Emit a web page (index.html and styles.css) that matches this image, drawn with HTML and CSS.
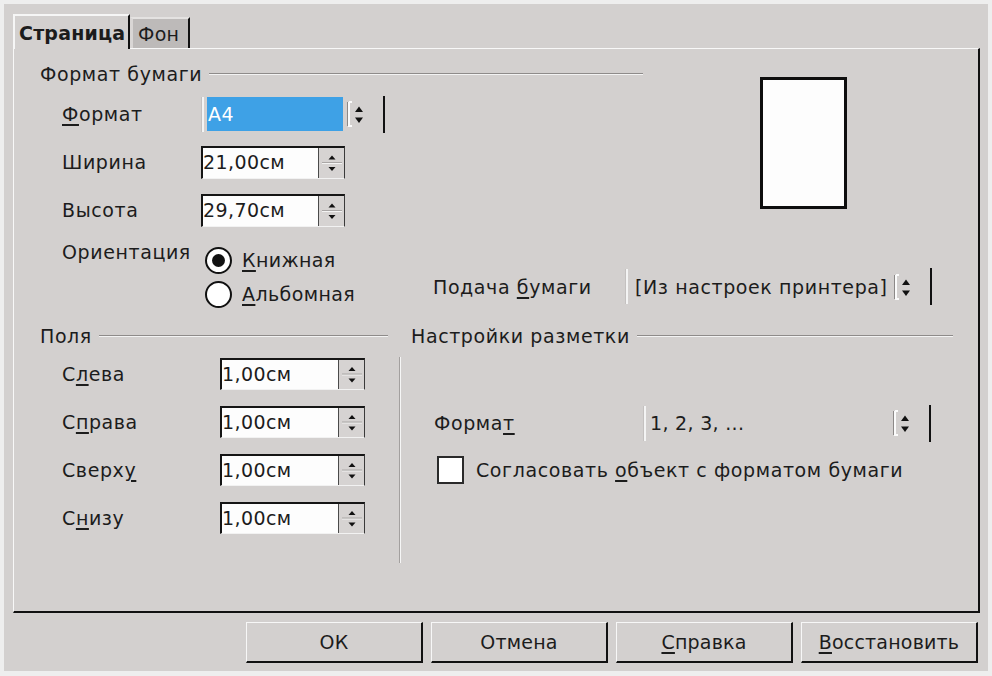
FILE: index.html
```html
<!DOCTYPE html>
<html lang="ru">
<head>
<meta charset="utf-8">
<title>Стиль страницы</title>
<link rel="stylesheet" href="styles.css">
</head>
<body>
<div class="dialog">
  <div class="tabs">
    <div class="tab tab-active">Страница</div>
    <div class="tab tab-inactive">Фон</div>
  </div>
  <div class="panel">
    <div class="top">
      <div class="group-title title-paper"><span>Формат бумаги</span><i class="rule"></i></div>
      <div class="preview"></div>

      <div class="lbl row2"><u>Ф</u>ормат</div>
      <div class="listbox lb-a4 row2">
        <span class="lb-edge-l"></span>
        <span class="lb-text lb-selected">A4</span>
        <svg class="lb-btn" width="18" height="30" viewBox="0 0 18 30"><path d="M1.5 3V27" stroke="#8c8988" stroke-width="1"/><path d="M3 3H6M3 3V27H6" stroke="#fbfbfb" stroke-width="2" fill="none"/><path d="M9 13L13 7.5L17 13Z" fill="#111"/><path d="M9 18.5L13 24L17 18.5Z" fill="#111"/></svg>
        <span class="lb-edge-r"></span>
      </div>

      <div class="lbl row3">Ширина</div>
      <div class="spinbox sb-top row3">
        <span class="sb-field">21,00см</span>
        <span class="sb-spin"><svg width="24" height="30" viewBox="0 0 24 30"><path d="M8.5 11.5L12 7.5L15.5 11.5Z" fill="#111"/><path d="M2 15.5H22" stroke="#f4f4f4" stroke-width="1"/><path d="M2 14.5H22" stroke="#aaa7a6" stroke-width="1"/><path d="M8.5 19L12 23L15.5 19Z" fill="#111"/></svg></span>
      </div>

      <div class="lbl row4">Высота</div>
      <div class="spinbox sb-top row4">
        <span class="sb-field">29,70см</span>
        <span class="sb-spin"><svg width="24" height="30" viewBox="0 0 24 30"><path d="M8.5 11.5L12 7.5L15.5 11.5Z" fill="#111"/><path d="M2 15.5H22" stroke="#f4f4f4" stroke-width="1"/><path d="M2 14.5H22" stroke="#aaa7a6" stroke-width="1"/><path d="M8.5 19L12 23L15.5 19Z" fill="#111"/></svg></span>
      </div>

      <div class="lbl lbl-orient row5">Ориентация</div>
      <div class="radios row5">
        <div class="radio"><span class="radio-circle"><span class="radio-dot"></span></span><span><u>К</u>нижная</span></div>
        <div class="radio"><span class="radio-circle"></span><span><u>А</u>льбомная</span></div>
      </div>

      <div class="feed row5">
        <div class="feed-label">Подача <u>б</u>умаги</div>
        <div class="listbox lb-feed">
          <span class="lb-edge-l"></span>
          <span class="lb-text">[Из настроек принтера]</span>
          <svg class="lb-btn" width="18" height="30" viewBox="0 0 18 30"><path d="M1.5 3V27" stroke="#8c8988" stroke-width="1"/><path d="M3 3H6M3 3V27H6" stroke="#fbfbfb" stroke-width="2" fill="none"/><path d="M9 13L13 7.5L17 13Z" fill="#111"/><path d="M9 18.5L13 24L17 18.5Z" fill="#111"/></svg>
          <span class="lb-edge-r"></span>
        </div>
      </div>
    </div>

    <div class="bottom">
      <div class="margins">
        <div class="group-title"><span>Поля</span><i class="rule"></i></div>
        <div class="mrows">
          <div class="mrow"><span class="mlabel">С<u>л</u>ева</span>
            <div class="spinbox"><span class="sb-field">1,00см</span><span class="sb-spin"><svg width="24" height="29" viewBox="0 0 24 29"><path d="M8.5 11L12 7L15.5 11Z" fill="#111"/><path d="M2 15H22" stroke="#f4f4f4" stroke-width="1"/><path d="M2 14H22" stroke="#aaa7a6" stroke-width="1"/><path d="M8.5 18.5L12 22.5L15.5 18.5Z" fill="#111"/></svg></span></div>
          </div>
          <div class="mrow"><span class="mlabel">С<u>п</u>рава</span>
            <div class="spinbox"><span class="sb-field">1,00см</span><span class="sb-spin"><svg width="24" height="29" viewBox="0 0 24 29"><path d="M8.5 11L12 7L15.5 11Z" fill="#111"/><path d="M2 15H22" stroke="#f4f4f4" stroke-width="1"/><path d="M2 14H22" stroke="#aaa7a6" stroke-width="1"/><path d="M8.5 18.5L12 22.5L15.5 18.5Z" fill="#111"/></svg></span></div>
          </div>
          <div class="mrow"><span class="mlabel">Сверх<u>у</u></span>
            <div class="spinbox"><span class="sb-field">1,00см</span><span class="sb-spin"><svg width="24" height="29" viewBox="0 0 24 29"><path d="M8.5 11L12 7L15.5 11Z" fill="#111"/><path d="M2 15H22" stroke="#f4f4f4" stroke-width="1"/><path d="M2 14H22" stroke="#aaa7a6" stroke-width="1"/><path d="M8.5 18.5L12 22.5L15.5 18.5Z" fill="#111"/></svg></span></div>
          </div>
          <div class="mrow"><span class="mlabel">С<u>н</u>изу</span>
            <div class="spinbox"><span class="sb-field">1,00см</span><span class="sb-spin"><svg width="24" height="29" viewBox="0 0 24 29"><path d="M8.5 11L12 7L15.5 11Z" fill="#111"/><path d="M2 15H22" stroke="#f4f4f4" stroke-width="1"/><path d="M2 14H22" stroke="#aaa7a6" stroke-width="1"/><path d="M8.5 18.5L12 22.5L15.5 18.5Z" fill="#111"/></svg></span></div>
          </div>
        </div>
      </div>

      <div class="vsep"></div>

      <div class="layout">
        <div class="group-title"><span>Настройки разметки</span><i class="rule"></i></div>
        <div class="lrow">
          <span class="llabel">Форма<u>т</u></span>
          <div class="listbox lb-num">
            <span class="lb-edge-l"></span>
            <span class="lb-text">1, 2, 3, ...</span>
            <svg class="lb-btn" width="18" height="30" viewBox="0 0 18 30"><path d="M1.5 3V27" stroke="#8c8988" stroke-width="1"/><path d="M3 3H6M3 3V27H6" stroke="#fbfbfb" stroke-width="2" fill="none"/><path d="M9 13L13 7.5L17 13Z" fill="#111"/><path d="M9 18.5L13 24L17 18.5Z" fill="#111"/></svg>
            <span class="lb-edge-r"></span>
          </div>
        </div>
        <div class="crow">
          <span class="checkbox"></span>
          <span>Согласовать <u>о</u>бъект с форматом бумаги</span>
        </div>
      </div>
    </div>
  </div>

  <div class="buttons">
    <div class="btn">ОК</div>
    <div class="btn">Отмена</div>
    <div class="btn"><u>С</u>правка</div>
    <div class="btn"><u>В</u>осстановить</div>
  </div>
</div>
</body>
</html>
```

FILE: styles.css
```css
html, body {
  margin: 0;
  padding: 0;
}
body {
  background: #eeeeee;
  font-family: "DejaVu Sans", "Noto Sans", sans-serif;
  font-size: 19px;
  line-height: 22px;
  color: #1c1c1c;
  letter-spacing: 0.6px;
}
u {
  text-decoration: underline;
  text-underline-offset: 3px;
  text-decoration-thickness: 2px;
}
.dialog {
  width: 984px;
  height: 667px;
  margin: 4px 4px 5px 4px;
  box-sizing: border-box;
  padding: 10px 8px 0 9px;
  background: #d3d0cf;
  display: flex;
  flex-direction: column;
}

/* tabs */
.tabs {
  display: flex;
  align-items: flex-end;
  height: 34px;
}
.tab {
  box-sizing: border-box;
}
.tab-active {
  position: relative;
  z-index: 1;
  width: 117px;
  height: 35px;
  margin-bottom: -1px;
  padding: 6px 0 0 4px;
  background: #d3d0cf;
  border-left: 2px solid #f6f6f6;
  border-top: 2px solid #f6f6f6;
  border-right: 2px solid #111;
  font-weight: bold;
  letter-spacing: 0.2px;
}
.tab-inactive {
  width: 60px;
  height: 31px;
  padding: 4px 0 0 5px;
  background: #bdbab9;
  border-left: 3px solid #d9d6d5;
  border-top: 2px solid #e4e2e1;
  border-right: 2px solid #111;
  letter-spacing: 0.3px;
}

/* panel */
.panel {
  box-sizing: border-box;
  height: 565px;
  border-top: 1px solid #f8f8f8;
  border-left: 1px solid #f8f8f8;
  border-right: 2px solid #111;
  border-bottom: 2px solid #111;
  padding: 14px 0 0 26px;
}

.group-title {
  display: flex;
  align-items: center;
  height: 22px;
}
.group-title .rule {
  flex: 1;
  height: 0;
  margin-left: 7px;
  border-top: 1px solid #8e8b8a;
  border-bottom: 1px solid #f3f3f3;
}

.top {
  display: grid;
  grid-template-columns: 22px 139px 232px 1fr;
  grid-template-rows: 27px 48px 48px 48px 78px;
}
.title-paper {
  grid-column: 1 / 5;
  grid-row: 1;
  width: 603px;
  align-self: start;
}
.preview {
  grid-column: 4;
  grid-row: 1 / 5;
  align-self: start;
  justify-self: start;
  margin: 14px 0 0 327px;
  width: 87px;
  height: 132px;
  box-sizing: border-box;
  border: 3px solid #0e0e0e;
  background: #fdfdfd;
}
.lbl {
  grid-column: 2;
  align-self: center;
}
.row2 { grid-row: 2; }
.row3 { grid-row: 3; }
.row4 { grid-row: 4; }
.row5 { grid-row: 5; }
.lbl-orient {
  align-self: start;
  margin-top: 7px;
}

/* listbox */
.listbox {
  display: flex;
  align-items: center;
  height: 37px;
  box-sizing: border-box;
}
.lb-a4 {
  grid-column: 3;
  align-self: center;
  width: 184px;
}
.lb-edge-l {
  width: 2px;
  height: 35px;
  background: #f4f4f4;
  border-left: 1px solid #c4c1c0;
}
.lb-text {
  flex: 1;
  padding-left: 6px;
  white-space: nowrap;
  overflow: hidden;
}
.lb-selected {
  margin: 0 3px 0 3px;
  height: 34px;
  line-height: 34px;
  padding-left: 1px;
  background: #3ea1e6;
  color: #fff;
}
.lb-btn {
  flex: none;
  display: block;
}
.lb-edge-r {
  width: 2px;
  height: 37px;
  margin-left: 19px;
  background: #111;
}

/* spinbox */
.spinbox {
  display: flex;
  width: 145px;
  height: 32px;
  box-sizing: border-box;
  border-top: 2px solid #151515;
  border-left: 2px solid #151515;
  border-bottom: 1px solid #f2f2f2;
  border-right: 1px solid #3a3a3a;
  background: #fff;
}
.sb-top {
  grid-column: 3;
  align-self: center;
  width: 144px;
  height: 33px;
}
.sb-field {
  flex: 1;
  line-height: 28px;
  padding-left: 0;
  background: #fdfdfd;
  letter-spacing: 0.4px;
}
.sb-spin {
  width: 26px;
  box-sizing: border-box;
  border-left: 1px solid #4a4a4a;
  background: #d6d3d2;
  display: flex;
  align-items: center;
  justify-content: center;
}
.sb-spin svg {
  display: block;
}

/* radios */
.radios {
  grid-column: 3;
  align-self: start;
  margin-top: 9px;
}
.radio {
  display: flex;
  align-items: center;
  height: 34px;
  letter-spacing: 0.4px;
}
.radio-circle {
  width: 27px;
  height: 27px;
  box-sizing: border-box;
  margin: 0 10px 0 4px;
  border: 2px solid #111;
  border-radius: 50%;
  background: #fff;
  display: flex;
  align-items: center;
  justify-content: center;
}
.radio-dot {
  width: 13px;
  height: 13px;
  border-radius: 50%;
  background: #111;
}

/* paper feed */
.feed {
  grid-column: 4;
  align-self: start;
  margin-top: 34px;
  display: flex;
  align-items: center;
}
.feed-label {
  width: 192px;
}
.lb-feed {
  width: 307px;
}
.lb-feed .lb-text {
  padding-left: 7px;
}

/* bottom section */
.bottom {
  display: flex;
  margin-top: 13px;
}
.margins {
  width: 348px;
}
.mrows {
  margin-top: 3px;
}
.mrow {
  display: flex;
  align-items: center;
  height: 48px;
  padding-left: 22px;
}
.mlabel {
  width: 158px;
}
.vsep {
  width: 1px;
  height: 206px;
  margin: 32px 10px 0 11px;
  border-left: 1px solid #a3a09f;
  background: #f6f6f6;
}
.layout {
  width: 542px;
}
.lrow {
  display: flex;
  align-items: center;
  height: 48px;
  margin-top: 52px;
  padding-left: 23px;
}
.llabel {
  width: 209px;
}
.lb-num {
  width: 288px;
}
.lb-num .lb-text {
  padding-left: 4px;
  letter-spacing: 0.3px;
}
.crow {
  display: flex;
  align-items: center;
  height: 46px;
  padding-left: 26px;
}
.checkbox {
  width: 27px;
  height: 28px;
  box-sizing: border-box;
  margin-right: 12px;
  border: 2px solid #2a2a2a;
  background: #fff;
}

/* buttons */
.buttons {
  display: flex;
  justify-content: flex-end;
  gap: 8px;
  margin-top: 9px;
  padding-right: 2px;
}
.btn {
  width: 177px;
  height: 41px;
  box-sizing: border-box;
  border-top: 1px solid #f7f7f7;
  border-left: 1px solid #f7f7f7;
  border-right: 2px solid #111;
  border-bottom: 2px solid #111;
  background: #d3d0cf;
  display: flex;
  align-items: center;
  justify-content: center;
  letter-spacing: 0.2px;
}
```
